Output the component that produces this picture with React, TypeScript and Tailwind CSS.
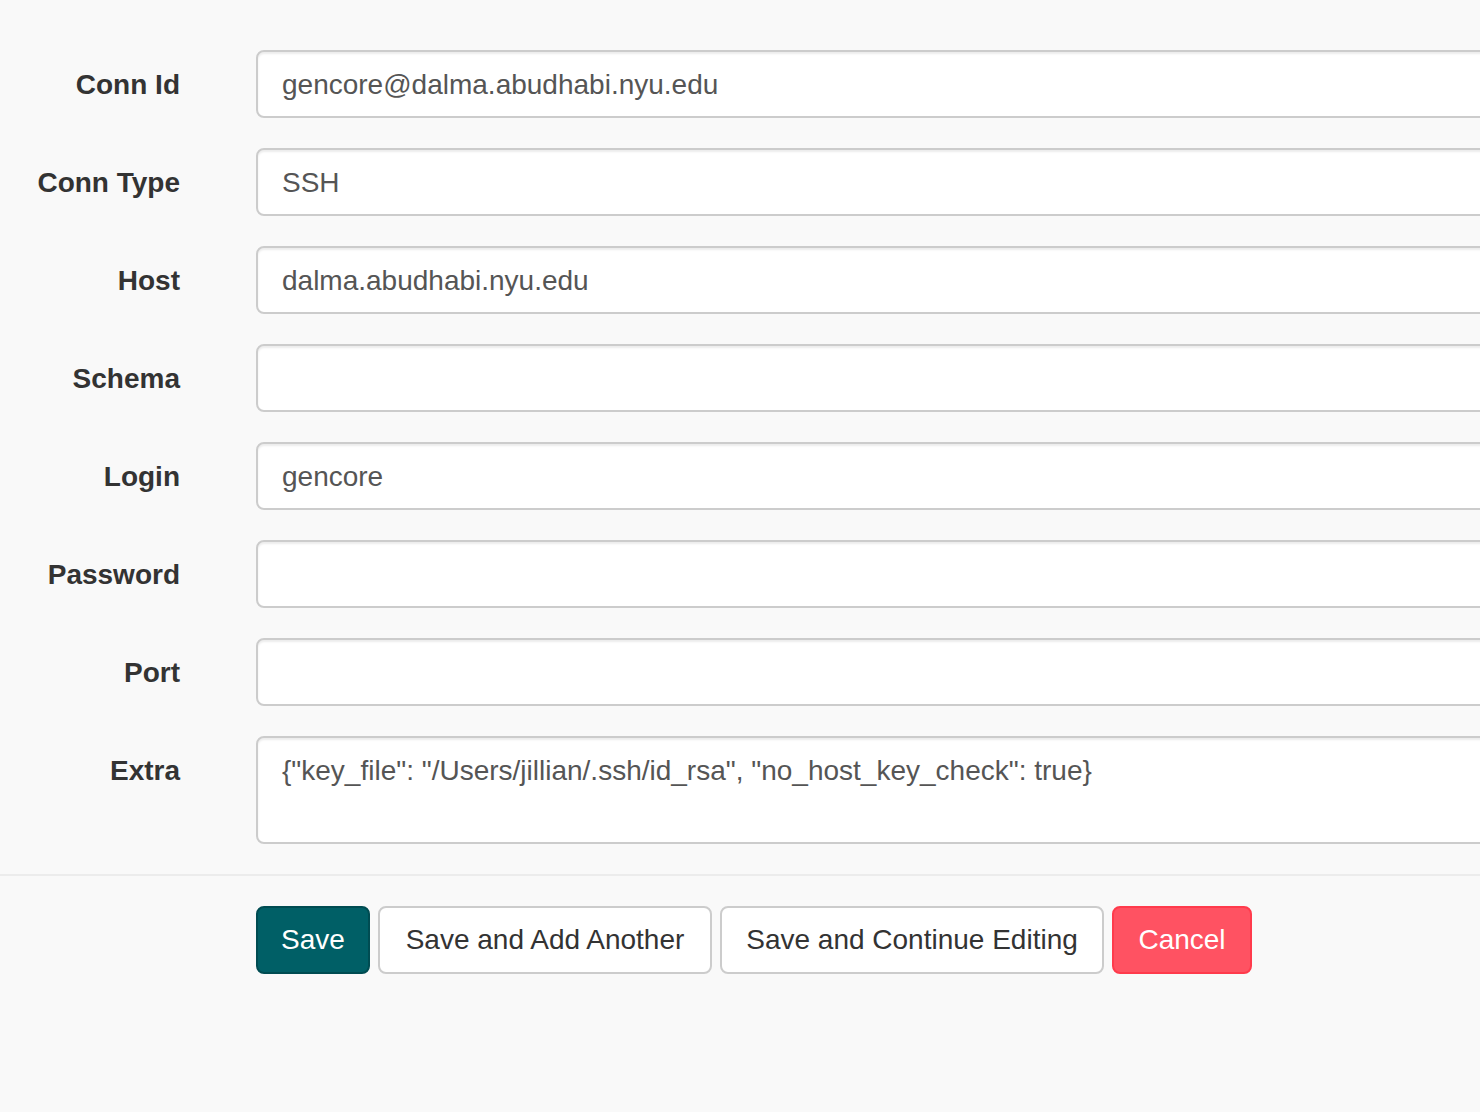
import React from 'react';

const fields = [
  { label: 'Conn Id', value: 'gencore@dalma.abudhabi.nyu.edu' },
  { label: 'Conn Type', value: 'SSH' },
  { label: 'Host', value: 'dalma.abudhabi.nyu.edu' },
  { label: 'Schema', value: '' },
  { label: 'Login', value: 'gencore' },
  { label: 'Password', value: '' },
  { label: 'Port', value: '' },
];

const font = { fontFamily: '"Liberation Sans", Arial, sans-serif' };

function Field({ label, value }: { label: string; value: string }) {
  return (
    <div className="flex items-center gap-[76px] mb-[30px]">
      <label className="w-[180px] shrink-0 text-right text-[28px] font-bold text-[#333] pt-[2px]">{label}</label>
      <div className="h-[68px] w-[1300px] shrink-0 rounded-[8px] border-2 border-[#ccc] bg-white px-[24px] pt-[2px] flex items-center text-[28px] text-[#555] shadow-[inset_0_2px_2px_rgba(0,0,0,0.075)]">
        {value}
      </div>
    </div>
  );
}

export default function App() {
  return (
    <div className="w-[1480px] h-[1112px] overflow-hidden bg-[#f9f9f9]" style={font}>
      <div className="pt-[50px]">
        {fields.map((f) => (
          <Field key={f.label} label={f.label} value={f.value} />
        ))}
        <div className="flex items-start gap-[76px]">
          <label className="w-[180px] shrink-0 text-right text-[28px] font-bold text-[#333] pt-[14px]">Extra</label>
          <div className="h-[108px] w-[1300px] shrink-0 rounded-[8px] border-2 border-[#ccc] bg-white px-[24px] pt-[12px] text-[28px] text-[#555] shadow-[inset_0_2px_2px_rgba(0,0,0,0.075)]">
            {'{"key_file": "/Users/jillian/.ssh/id_rsa", "no_host_key_check": true}'}
          </div>
        </div>
      </div>
      <div className="mt-[30px] border-t-2 border-[#ececec] pt-[30px] pl-[256px] flex gap-[8px]">
        <button className="h-[68px] w-[114px] rounded-[8px] border-2 border-[#004c52] bg-[#005f66] text-white text-[28px]">Save</button>
        <button className="h-[68px] w-[334px] rounded-[8px] border-2 border-[#ccc] bg-white text-[#333] text-[28px]">Save and Add Another</button>
        <button className="h-[68px] w-[384px] rounded-[8px] border-2 border-[#ccc] bg-white text-[#333] text-[28px]">Save and Continue Editing</button>
        <button className="h-[68px] w-[140px] rounded-[8px] border-2 border-[#ff3b4c] bg-[#ff5262] text-white text-[28px]">Cancel</button>
      </div>
    </div>
  );
}
